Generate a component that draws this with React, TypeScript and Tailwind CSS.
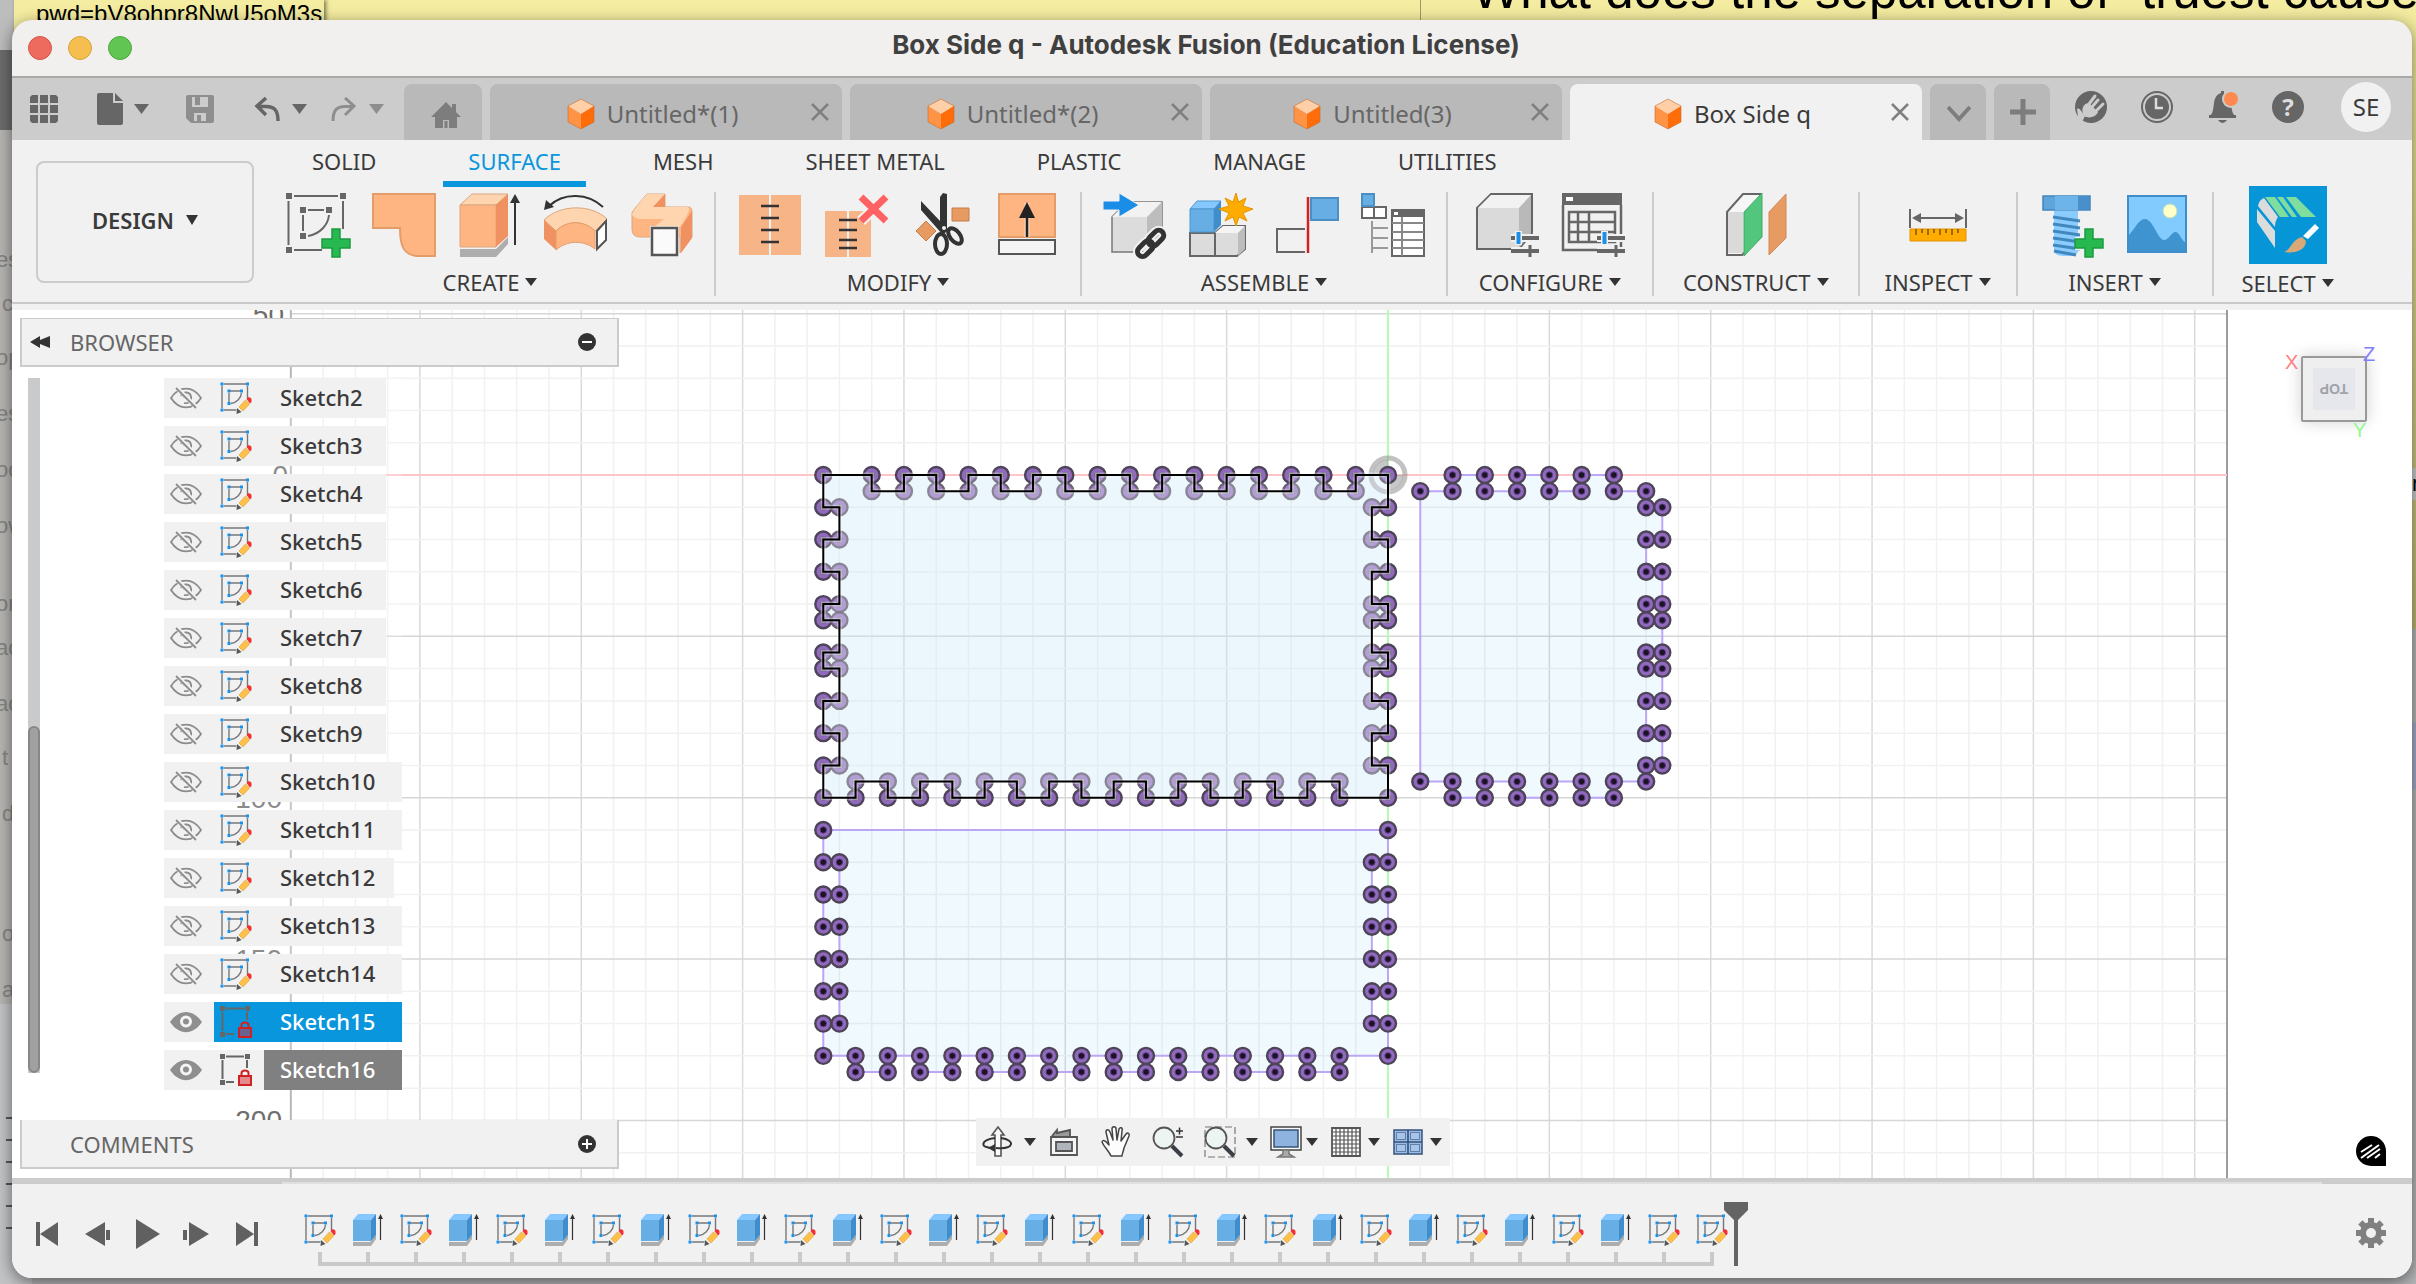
import React from "react";

type Pt = [number, number];

/* ---------- small shared drawings ---------- */

function Caret({ className = "h-2.5 w-3 text-[#333]" }: { className?: string }) {
  return (
    <svg viewBox="0 0 12 10" preserveAspectRatio="none" className={className} aria-hidden="true">
      <path d="M0 0H12L6 10Z" fill="currentColor" />
    </svg>
  );
}

function Cube() {
  return (
    <svg viewBox="0 0 28 32" className="h-8 w-7 shrink-0" aria-hidden="true">
      <path d="M14 1L27 8L14 16L1 8Z" fill="#ffcfa8" />
      <path d="M1 8L14 16V31L1 24Z" fill="#ff9447" />
      <path d="M27 8L14 16V31L27 24Z" fill="#ff6d0a" />
      <path d="M14 1L27 8V24L14 31L1 24V8Z" fill="none" stroke="#c96a2c" strokeOpacity=".6" />
    </svg>
  );
}

function SketchPencil() {
  return (
    <svg viewBox="0 0 32 32" className="h-8 w-8 shrink-0" aria-hidden="true">
      <g fill="none" stroke="#777" strokeWidth="1.4">
        <path d="M4 2H26M2 4V26M27.500 4V17M4 28H17M10 9H20M9 11V20M21.500 11C21 16 17 20.500 11 21.500" />
      </g>
      <g fill="#1c8fe8">
        <path d="M.5 .5h3v3h-3zM26 .5h3v3h-3zM.5 26.500h3v3h-3zM7.500 7.500h3v3h-3zM20 7.500h3v3h-3zM7.500 20h3v3h-3z" />
      </g>
      <path d="M18 23L25 15L32 21L23 31L15 32Z" fill="#f1f1f1" />
      <path d="M19 25L25.500 18L29.500 22L23 29Z" fill="#ffc04a" stroke="#e0a53a" strokeWidth=".7" />
      <path d="M26.500 17C28 14.500 31 15 31.500 17.500V20L30 21.500Z" fill="#f23030" />
      <path d="M17 26L21.500 30L16.500 32Z" fill="#555" />
    </svg>
  );
}

function SketchLock({ selected }: { selected?: boolean }) {
  return (
    <svg viewBox="0 0 32 32" className="h-8 w-8 shrink-0" aria-hidden="true">
      <path d="M6 2.500H24M2.500 6V25M27 6V14M6 28H14" fill="none" stroke="#666" strokeWidth="2" />
      <path d="M0 0h5v5h-5zM25 0h5v5h-5zM0 26h5v5h-5z" fill="#666" />
      <rect x="19" y="22" width="12" height="9" fill={selected ? "#6a6290" : "#e28a8c"} stroke="#d02222" strokeWidth="2" />
      <path d="M21.500 21V19C21.500 15.500 28.500 15.500 28.500 19V21" fill="none" stroke="#d02222" strokeWidth="2" />
    </svg>
  );
}

function EyeOff() {
  return (
    <svg viewBox="0 0 32 22" className="h-[22px] w-8" fill="none" stroke="#8c8c8c" strokeWidth="1.8" aria-hidden="true">
      <path d="M1 11C9-1.500 23-1.500 31 11C23 23.500 9 23.500 1 11Z" />
      <path d="M11 9C13 4 20 4.500 21 9.500C22 14 18 17 14 16M13.500 10.500C14 8.500 18 8.500 18 11.500" />
      <path d="M8 2L27 21" stroke="#f1f1f1" strokeWidth="4" />
      <path d="M6 1L26 21" />
    </svg>
  );
}

function EyeOn() {
  return (
    <svg viewBox="0 0 32 22" className="h-[22px] w-8" aria-hidden="true">
      <path d="M0 11C9-2.500 23-2.500 32 11C23 24.500 9 24.500 0 11Z" fill="#8f8f8f" />
      <circle cx="16" cy="10.500" r="4.500" fill="none" stroke="#f4f4f4" strokeWidth="3" />
    </svg>
  );
}

function ExtrudeSmall() {
  return (
    <svg viewBox="0 0 32 32" className="h-8 w-8 shrink-0" aria-hidden="true">
      <path d="M1 28H18L24 21V25L19 32H1Z" fill="#adadad" />
      <path d="M1 6L6 0H24L19 6Z" fill="#85c7ff" />
      <path d="M1 6H19V27H1Z" fill="#67aee5" />
      <path d="M19 6L24 0V21L19 27Z" fill="#3f8dcb" />
      <path d="M28.500 5V26" stroke="#333" strokeWidth="1.2" />
      <path d="M28.500 0L31 5H26Z" fill="#333" />
    </svg>
  );
}

function Icon({ children, label }: { children: React.ReactNode; label: string }) {
  return (
    <button type="button" aria-label={label} className="block h-16 w-16 shrink-0">
      <svg viewBox="0 0 64 64" className="h-16 w-16 overflow-visible" fill="none" aria-hidden="true">
        {children}
      </svg>
    </button>
  );
}

const GreenPlus = () => (
  <path
    d="M46 36H54V46H64V55H54V64H46V55H36V46H46Z"
    fill="#27b84f"
    stroke="#1d9a40"
    strokeWidth="1.5"
  />
);

const Sliders = () => (
  <g strokeWidth="4">
    <path d="M36 45H64M36 58H64" stroke="#f1f1f1" strokeWidth="8" />
    <path d="M36 45H64M36 58H64" stroke="#666" />
    <path d="M55 52V64" stroke="#666" strokeWidth="3" />
    <path d="M43.500 38V52" stroke="#f1f1f1" strokeWidth="7" />
    <path d="M43.500 39V51" stroke="#1c8fe8" />
  </g>
);

/* ---------- ribbon ---------- */

function Group({ title, pad, children }: { title: string; pad: string; children: React.ReactNode }) {
  return (
    <section aria-label={title} className={`flex h-[104px] flex-col items-center border-r-2 border-[#cbcbcb] ${pad}`}>
      <div className="flex h-[68px] items-center gap-[22px]">{children}</div>
      <button type="button" className="mt-2.5 flex items-center gap-1.5 text-[22px] leading-7 whitespace-nowrap text-[#3a3a3a]">
        {title}
        <Caret className="h-2 w-3 text-[#333]" />
      </button>
    </section>
  );
}

const ribbonTabs = ["SOLID", "SURFACE", "MESH", "SHEET METAL", "PLASTIC", "MANAGE", "UTILITIES"];

function Ribbon() {
  return (
    <div className="flex h-[170px] shrink-0 border-b-[6px] border-[#f1f1f1] bg-[#f1f1f1]">
      <div className="flex w-full border-b-2 border-[#c9c9c9] pl-6">
        <button
          type="button"
          className="mt-[21px] flex h-[122px] w-[218px] shrink-0 items-center justify-center gap-3 rounded-lg border-2 border-[#cbcbcb] pb-1 text-[22px] font-semibold text-[#3a3a3a]"
        >
          DESIGN
          <Caret className="h-2.5 w-3 text-[#333]" />
        </button>
        <div className="ml-3">
          <nav className="flex h-[47px] gap-[42px] pl-[21px]" aria-label="Workspace tabs">
            {ribbonTabs.map((t) => (
              <a
                key={t}
                href="#"
                className={`h-[47px] px-[25px] pt-[7px] text-[22px] leading-7 whitespace-nowrap ${
                  t === "SURFACE" ? "border-b-[6px] border-[#0a96dc] text-[#0a96dc]" : "text-[#3a3a3a]"
                }`}
              >
                {t}
              </a>
            ))}
          </nav>
          <div className="flex pt-[5px]">
            <Group title="CREATE" pad="px-5">
              <Icon label="Create sketch">
                <path d="M8 3H52M2.500 8V52M57 8V36M8 57H36M22 17H38M17 22V38M43 22C42 32 34 41 22 43" stroke="#666" strokeWidth="2" />
                <path d="M0 0h6v6h-6zM54 0h6v6h-6zM0 54h6v6h-6zM14 14h6v6h-6zM40 14h6v6h-6zM14 40h6v6h-6z" fill="#666" />
                <GreenPlus />
              </Icon>
              <Icon label="Patch">
                <path d="M1 1H63V63H44C32 61 28 54 28 35H1Z" fill="#ffb581" stroke="#e49c69" strokeWidth="2" />
              </Icon>
              <Icon label="Extrude">
                <path d="M2 56H38L50 44V51L38 64H2Z" fill="#adadad" />
                <path d="M2 12L14 1H50L38 12Z" fill="#ffd5b0" stroke="#dba77e" />
                <path d="M2 12H38V54H2Z" fill="#ffb581" stroke="#dba77e" />
                <path d="M38 12L50 1V43L38 54Z" fill="#ef9160" />
                <path d="M57 8V52" stroke="#333" strokeWidth="2" />
                <path d="M57 1L62 10H52Z" fill="#333" />
              </Icon>
              <Icon label="Revolve">
                <path d="M5 13C20-1 44 0 59 14" stroke="#333" strokeWidth="2" />
                <path d="M0 17L2 7L10 14Z" fill="#333" />
                <path d="M0 27C16 11 48 11 63 26L51 38C40 27 23 27 12 38Z" fill="#ffd5b0" stroke="#dba77e" />
                <path d="M0 27L12 38V57L0 46Z" fill="#ef9160" />
                <path d="M12 38C23 27 40 27 51 38V56C40 47 23 47 12 57Z" fill="#ffb581" stroke="#e49c69" />
                <path d="M53 38L62 28V47L53 56Z" fill="#fff" stroke="#555" strokeWidth="2" />
              </Icon>
              <Icon label="Loft">
                <path d="M2 20Q3 17 17 1H35V14H58Q62 14 62 19V44L50 60V44H10Q2 44 2 36Z" fill="#ffb581" stroke="#dba77e" />
                <path d="M2 22Q3 17 17 1H35L23 14H58Q62 16 50 34H24L34 26H12Q5 26 2 22Z" fill="#ffd5b0" />
                <path d="M35 1V14H23ZM62 18V45L51 60V34Z" fill="#ef9160" />
                <path d="M20 33H49V64H20Z" fill="#f1f1f1" />
                <path d="M22 35H47V62H22Z" fill="#fafafa" stroke="#555" strokeWidth="2.500" />
              </Icon>
            </Group>
            <Group title="MODIFY" pad="px-[21px]">
              <Icon label="Stitch">
                <path d="M2 2H64V62H2Z" fill="#f7b587" />
                <path d="M33 2V62" stroke="#f1f1f1" strokeWidth="2" />
                <path d="M24 13H42M24 25H42M24 37H42M24 49H42" stroke="#333" strokeWidth="2.500" />
              </Icon>
              <Icon label="Unstitch">
                <path d="M2 18H48V64H2Z" fill="#f7b587" />
                <path d="M25 18V64" stroke="#f1f1f1" strokeWidth="2" />
                <path d="M16 27H34M16 37H34M16 47H34M16 55H34" stroke="#333" strokeWidth="2.500" />
                <path d="M38 4L63 28M63 4L38 28" stroke="#f1f1f1" strokeWidth="11" />
                <path d="M38 4L63 28M63 4L38 28" stroke="#ff6262" strokeWidth="7" />
              </Icon>
              <Icon label="Trim">
                <path d="M43 15H60V28H43ZM17 28L27 38L17 48L7 38Z" fill="#e89a63" stroke="#c77d48" />
                <path d="M12 8L40 44M34 0V44" stroke="#f1f1f1" strokeWidth="10" />
                <path d="M12 8V17L34 42L38 38V1L34 0L31 4V28Z" fill="#333" />
                <ellipse cx="32" cy="51" rx="6" ry="10" stroke="#333" strokeWidth="4" />
                <ellipse cx="46" cy="43" rx="5" ry="9" transform="rotate(-38 46 43)" stroke="#333" strokeWidth="4" />
                <circle cx="35" cy="35" r="2" fill="#f1f1f1" />
              </Icon>
              <Icon label="Extend">
                <path d="M4 1H60V44H4Z" fill="#ffb581" stroke="#e49c69" strokeWidth="2" />
                <path d="M32 10V44" stroke="#f7d5bd" strokeWidth="5" />
                <path d="M32 14V44" stroke="#222" strokeWidth="2.500" />
                <path d="M32 9L40 25H24Z" fill="#222" />
                <path d="M4 47H60V61H4Z" fill="#f4f4f4" stroke="#555" strokeWidth="2" />
              </Icon>
            </Group>
            <Group title="ASSEMBLE" pad="px-[21px]">
              <Icon label="Insert derive">
                <path d="M9 24L24 9H59V44L44 59H9Z" fill="#dcdcdc" stroke="#777" strokeWidth="1.500" />
                <path d="M9 24L24 9H59L44 24Z" fill="#f2f2f2" />
                <path d="M44 24L59 9V45L44 60Z" fill="#bdbdbd" />
                <path d="M0 8H16V0L36 12L16 24V17H0Z" fill="#1a8de6" stroke="#f1f1f1" />
                <g transform="rotate(-45 48 50)" stroke="#f1f1f1" strokeWidth="9">
                  <rect x="31" y="45" width="18" height="10" rx="5" />
                  <rect x="46" y="45" width="18" height="10" rx="5" />
                </g>
                <g transform="rotate(-45 48 50)" stroke="#333" strokeWidth="5">
                  <rect x="31" y="45" width="18" height="10" rx="5" />
                  <rect x="46" y="45" width="18" height="10" rx="5" />
                </g>
              </Icon>
              <Icon label="New component">
                <path d="M1 40H26V63H1ZM26 40L34 33H56V56L48 63H26Z" fill="#dcdcdc" stroke="#666" strokeWidth="2" />
                <path d="M26 40L34 33H56L49 40Z" fill="#f4f4f4" />
                <path d="M49 40L56 33V56L49 63Z" fill="#bdbdbd" />
                <path d="M1 16L8 8H32L25 16Z" fill="#85c7ff" stroke="#4b97d0" />
                <path d="M1 16H25V39H1Z" fill="#67aee5" stroke="#4b97d0" />
                <path d="M25 16L32 8V32L25 39Z" fill="#3f8dcb" />
                <path
                  d="M47 0L49.500 9L57 5L54 13L64 16L54 20L58 28L50 24L47 33L44 24L36 28L40 20L30 16L40 13L36 5L44 9Z"
                  fill="#ffab00"
                  stroke="#e39400"
                />
              </Icon>
              <Icon label="Joint">
                <path d="M30 36H2V59H30" fill="#f1f1f1" stroke="#666" strokeWidth="2" />
                <path d="M33 4V60" stroke="#d02222" strokeWidth="2.500" />
                <path d="M36 5H63V27H36Z" fill="#67aee5" stroke="#4b8fc4" strokeWidth="2" />
              </Icon>
              <Icon label="Component table">
                <path d="M1 14H13V25H1ZM13 14H25V25H13Z" fill="#fff" stroke="#666" strokeWidth="2" />
                <path d="M1 1H13V13H1Z" fill="#67aee5" stroke="#4b8fc4" strokeWidth="2" />
                <path d="M11 28V60M11 35H27M11 45H27M11 55H27" stroke="#999" strokeWidth="2" />
                <path d="M31 17H63V63H31Z" fill="#fff" stroke="#666" strokeWidth="2" />
                <path d="M30 16H64V24H30Z" fill="#666" />
                <path d="M31 30H63M31 39H63M31 47H63M31 55H63M41 24V63" stroke="#888" strokeWidth="2" />
                <path d="M33 19h4v3h-4z" fill="#fff" />
              </Icon>
            </Group>
            <Group title="CONFIGURE" pad="px-[27px]">
              <Icon label="Configure model">
                <path d="M2 15L16 1H57V40L44 56H2Z" fill="#dadada" stroke="#666" strokeWidth="2" />
                <path d="M3 15L16 2H56L44 15Z" fill="#f2f2f2" />
                <path d="M44 15L56 2V40L44 55Z" fill="#b9b9b9" />
                <Sliders />
              </Icon>
              <Icon label="Configuration table">
                <path d="M2 12V57H60V12" fill="#f1f1f1" stroke="#666" strokeWidth="2.500" />
                <path d="M1 0H61V12H1Z" fill="#666" />
                <path d="M5 4h7v4h-7z" fill="#fff" />
                <path d="M8 19H54V49H8ZM8 29H54M8 39H54M17 19V49M28 19V49" stroke="#666" strokeWidth="2.500" />
                <Sliders />
              </Icon>
            </Group>
            <Group title="CONSTRUCT" pad="px-[29px]">
              <Icon label="Offset plane">
                <path d="M3 19L19 1H36V44L18 62H3Z" fill="#f6f6f6" stroke="#666" strokeWidth="2" />
                <path d="M4 19H19V60H4Z" fill="#dadada" />
                <path d="M20 19L38 0V44L20 63Z" fill="#52c67c" stroke="#40a866" />
                <path d="M39 0V50L46 44V0Z" fill="#f1f1f1" />
                <path d="M45 19L62 1V45L45 62Z" fill="#e89a63" stroke="#cf8855" />
              </Icon>
            </Group>
            <Group title="INSPECT" pad="px-[25px]">
              <Icon label="Measure">
                <path d="M4 16V35M60 16V35M8 25H56" stroke="#666" strokeWidth="2" />
                <path d="M6 25L15 20V30ZM58 25L49 20V30Z" fill="#666" />
                <path d="M4 36H60V48H4Z" fill="#ffab00" stroke="#e39400" />
                <path d="M10 36V42M16 36V40M22 36V42M28 36V40M34 36V42M40 36V40M46 36V42M52 36V40" stroke="#7a5600" strokeWidth="1.500" />
              </Icon>
            </Group>
            <Group title="INSERT" pad="px-[22px]">
              <Icon label="Insert fastener">
                <path d="M14 18H38V58Q38 63 26 63Q14 63 14 58Z" fill="#8accff" />
                <path d="M13 24L40 28M13 31L40 35M13 38L40 42M13 45L40 49M13 52L40 56M14 58L36 62" stroke="#4088bd" strokeWidth="3" />
                <path d="M3 3H50V17H3Z" fill="#5fa5dc" stroke="#3f86bd" strokeWidth="1.500" />
                <path d="M15 3H38V17H15Z" fill="#6db4ea" />
                <path d="M38 3H49V16H38Z" fill="#4790cb" />
                <path d="M45 34H56V44H65V57H56V65H45V57H35V44H45Z" fill="#f1f1f1" />
                <g transform="translate(-1 0)">
                  <GreenPlus />
                </g>
              </Icon>
              <Icon label="Canvas">
                <path d="M2 3H60V59H2Z" fill="#82cbff" stroke="#3f8dcb" strokeWidth="2" />
                <path d="M3 42C10 34 13 26 19 26C27 26 32 47 38 47C43 47 46 38 50 39C54 40 55 47 59 49V58H3Z" fill="#3f93ce" />
                <circle cx="44" cy="18" r="7" fill="#ffffc8" stroke="#bcdcc0" />
              </Icon>
            </Group>
            <section aria-label="Select" className="-mt-[6px] flex flex-col items-center px-7">
              <button type="button" aria-label="Select tool" className="h-[78px] w-[78px] bg-[#0696d7]">
                <svg viewBox="0 0 78 78" className="h-full w-full" fill="none" aria-hidden="true">
                  <path d="M16 11H26L40 31H31ZM28 11H34L48 31H43ZM37 11H47L67 31H52Z" fill="#7fdd9e" />
                  <path d="M15 12L29 31Q26 35 26 41L9 20Q10 14 15 12Z" fill="#dcdcdc" />
                  <path d="M8 23L26 45V62L8 36Z" fill="#dcdcdc" />
                  <path d="M66 38L70 42L59 53L54 50Z" fill="#fff" />
                  <path d="M53 51L57 55C57 64 46 68 35 66C42 64 42 54 53 51Z" fill="#d9a877" />
                </svg>
              </button>
              <button type="button" className="mt-[5px] flex items-center gap-1.5 text-[22px] leading-7 text-[#3a3a3a]">
                SELECT
                <Caret className="h-2 w-3 text-[#333]" />
              </button>
            </section>
          </div>
        </div>
      </div>
    </div>
  );
}

/* ---------- document tabs ---------- */

const docs = [
  { name: "Untitled*(1)", active: false },
  { name: "Untitled*(2)", active: false },
  { name: "Untitled(3)", active: false },
  { name: "Box Side q", active: true },
];

function TabBar() {
  return (
    <div className="flex h-16 shrink-0 border-t-2 border-[#a9a9a9] bg-[#ccc] text-[#666]">
      <div className="flex w-[392px] shrink-0 items-center pl-[18px]">
        <button type="button" aria-label="Data panel">
          <svg viewBox="0 0 28 28" className="h-7 w-7" fill="currentColor" aria-hidden="true">
            <path d="M2 0h6v8h-8v-6zM10 0h8v8h-8zM20 0h6l2 2v6h-8zM0 10h8v8h-8zM10 10h8v8h-8zM20 10h8v8h-8zM0 20h8v8h-6l-2-2zM10 20h8v8h-8zM20 20h8v6l-2 2h-6z" />
          </svg>
        </button>
        <button type="button" aria-label="File" className="ml-[39px] flex items-center gap-[11px]">
          <svg viewBox="0 0 26 32" className="h-8 w-[26px]" fill="currentColor" aria-hidden="true">
            <path d="M2 0H16V10H26V30Q26 32 24 32H2Q0 32 0 30V2Q0 0 2 0Z" />
            <path d="M18 0L26 8H18Z" />
          </svg>
          <Caret className="h-2.5 w-[15px]" />
        </button>
        <button type="button" aria-label="Save" className="ml-[37px] text-[#8e8e8e]">
          <svg viewBox="0 0 28 28" className="h-7 w-7" fill="currentColor" fillRule="evenodd" aria-hidden="true">
            <path d="M0 2Q0 0 2 0H26Q28 0 28 2V26Q28 28 26 28H5L0 23ZM6 2V12H22V2ZM8 18V26H20V18ZM11 20H15V26H11ZM14 2V10H9V2Z" />
          </svg>
        </button>
        <button type="button" aria-label="Undo" className="ml-10 flex items-center gap-3">
          <svg viewBox="0 0 26 24" className="h-6 w-[26px]" fill="none" stroke="currentColor" strokeWidth="3.500" aria-hidden="true">
            <path d="M12 1L3 9L12 18M3 9.500H12C21 9.500 24 14 24 24" />
          </svg>
          <Caret className="h-2.5 w-[15px]" />
        </button>
        <button type="button" aria-label="Redo" className="ml-6 flex items-center gap-3 text-[#8e8e8e]">
          <svg viewBox="0 0 26 24" className="h-6 w-[26px]" fill="none" stroke="currentColor" strokeWidth="3" aria-hidden="true">
            <path d="M14 1L23 9L14 18M23 9.500H14C5 9.500 2 14 2 24" />
          </svg>
          <Caret className="h-2.5 w-[15px]" />
        </button>
      </div>
      <div className="flex min-w-0 flex-1 items-end gap-2">
        <button type="button" aria-label="Home" className="flex h-14 w-[78px] shrink-0 items-center justify-center rounded-t-lg bg-[#b9b9b9] pt-1.5 pl-1.5 text-[#7d7d7d]">
          <svg viewBox="0 0 30 28" className="h-7 w-[30px]" fill="currentColor" aria-hidden="true">
            <path d="M15 1L21 7V3H25V11L30 16H26V27H18V19H12V27H4V16H0Z" />
            <path d="M13.500 20h3v7h-3z" />
          </svg>
        </button>
        {docs.map((d) => (
          <div
            key={d.name}
            className={`flex h-14 min-w-0 flex-1 items-center rounded-t-lg pt-1 pr-[11px] ${
              d.active ? "bg-[#f1f1f1] text-[#3a3a3a]" : "bg-[#b9b9b9] text-[#666]"
            }`}
          >
            <button type="button" className="flex flex-1 items-center justify-center gap-3 pl-1.5 text-2xl leading-8 whitespace-nowrap">
              <Cube />
              {d.name}
            </button>
            <button type="button" aria-label={`Close ${d.name}`} className="text-[#808080]">
              <svg viewBox="0 0 22 18" className="mb-1 h-[18px] w-[22px]" fill="none" stroke="currentColor" strokeWidth="2.500" aria-hidden="true">
                <path d="M3 1L19 17M19 1L3 17" />
              </svg>
            </button>
          </div>
        ))}
        <button type="button" aria-label="All tabs" className="flex h-14 w-14 shrink-0 items-center justify-center rounded-t-lg bg-[#b9b9b9] pt-1 pl-0.5 text-[#7d7d7d]">
          <svg viewBox="0 0 24 18" className="h-[18px] w-6" fill="none" stroke="currentColor" strokeWidth="4" aria-hidden="true">
            <path d="M1 2L12 14L23 2" />
          </svg>
        </button>
        <button type="button" aria-label="New tab" className="flex h-14 w-14 shrink-0 items-center justify-center rounded-t-lg bg-[#b9b9b9] pl-0.5 text-[#7d7d7d]">
          <svg viewBox="0 0 26 26" className="h-[26px] w-[26px]" fill="none" stroke="currentColor" strokeWidth="5" aria-hidden="true">
            <path d="M13 0V26M0 13H26" />
          </svg>
        </button>
      </div>
      <div className="flex shrink-0 items-center gap-[33px] pr-[21px] pb-1 pl-[25px]">
        <button type="button" aria-label="Extensions">
          <svg viewBox="0 0 32 32" className="h-8 w-8" aria-hidden="true">
            <circle cx="16" cy="16" r="16" fill="#666" />
            <path d="M2 18C5 16 6 21 10 25L7 31L3 26Z" fill="#ccc" />
            <path d="M9 25C5 18 9 12 14 12L23 21C21 26 14 28 9 25Z" fill="#ccc" />
            <path d="M14 13L20 5M17 16L23 9M21 20L28 13" stroke="#ccc" strokeWidth="3" fill="none" strokeLinecap="round" />
          </svg>
        </button>
        <button type="button" aria-label="Job status">
          <svg viewBox="0 0 34 34" className="h-[34px] w-[34px]" fill="none" aria-hidden="true">
            <circle cx="17" cy="17" r="15" stroke="#666" strokeWidth="2" />
            <circle cx="17" cy="17" r="12" fill="#666" />
            <path d="M16 8V18H23" stroke="#ddd" strokeWidth="2.500" />
          </svg>
        </button>
        <button type="button" aria-label="Notifications">
          <svg viewBox="0 0 32 34" className="h-[34px] w-8" aria-hidden="true">
            <path d="M3 26C6 23 6 20 7 13C8 6 11 4 14 3V1H17V3C22 5 23 8 24 13C25 20 25 23 28 26Z" fill="#666" />
            <path d="M11 30H20Q18 33 15.500 33Q13 33 11 30ZM2 25H29V28H2Z" fill="#666" />
            <circle cx="24" cy="9" r="9" fill="#ccc" />
            <circle cx="24" cy="9" r="7" fill="#ff8a50" />
          </svg>
        </button>
        <button type="button" aria-label="Help" className="flex h-8 w-8 items-center justify-center rounded-full bg-[#666] text-2xl leading-8 font-bold text-[#ddd]">
          ?
        </button>
        <button type="button" className="ml-1 flex h-[50px] w-[50px] items-center justify-center rounded-full bg-[#f1f1f1] text-2xl text-[#3a3a3a]">
          SE
        </button>
      </div>
    </div>
  );
}

/* ---------- canvas ---------- */

const H = 16.135;
const OX = 1376;
const OY = 165;
const px = (p: Pt): Pt => [OX + p[0] * H, OY + p[1] * H];
const toPath = (pts: Pt[]) => "M" + pts.map((p) => px(p).join(" ")).join("L") + "Z";

const sideLevels = [2, 4, 6, 8, 9, 11, 12, 14, 16, 18];

function buildFront(): Pt[] {
  const pts: Pt[] = [[-35, 0]];
  for (let x = -32; x <= -4; x += 4) pts.push([x, 0], [x, 1], [x + 2, 1], [x + 2, 0]);
  pts.push([0, 0]);
  sideLevels.forEach((y, i) => pts.push(i % 2 ? [-1, y] : [0, y], i % 2 ? [0, y] : [-1, y]));
  pts.push([0, 20]);
  for (let x = -3; x >= -31; x -= 4) pts.push([x, 20], [x, 19], [x - 2, 19], [x - 2, 20]);
  pts.push([-35, 20]);
  [...sideLevels].reverse().forEach((y, i) => pts.push(i % 2 ? [-34, y] : [-35, y], i % 2 ? [-35, y] : [-34, y]));
  return pts;
}

function buildSide(): Pt[] {
  const pts: Pt[] = [[2, 1]];
  for (let x = 4; x <= 12; x += 4) pts.push([x, 1], [x, 0], [x + 2, 0], [x + 2, 1]);
  pts.push([16, 1]);
  sideLevels.forEach((y, i) => pts.push(i % 2 ? [17, y] : [16, y], i % 2 ? [16, y] : [17, y]));
  pts.push([16, 19]);
  for (let x = 14; x >= 6; x -= 4) pts.push([x, 19], [x, 20], [x - 2, 20], [x - 2, 19]);
  pts.push([2, 19]);
  return pts;
}

function buildBottom(): Pt[] {
  const levels = [24, 26, 28, 30, 32, 34];
  const pts: Pt[] = [[-35, 22], [0, 22]];
  levels.forEach((y, i) => pts.push(i % 2 ? [-1, y] : [0, y], i % 2 ? [0, y] : [-1, y]));
  pts.push([0, 36]);
  for (let x = -3; x >= -31; x -= 4) pts.push([x, 36], [x, 37], [x - 2, 37], [x - 2, 36]);
  pts.push([-35, 36]);
  [...levels].reverse().forEach((y, i) => pts.push(i % 2 ? [-34, y] : [-35, y], i % 2 ? [-35, y] : [-34, y]));
  return pts;
}

const front = buildFront();
const side = buildSide();
const bottom = buildBottom();
const isInner = (p: Pt) => p[0] === -1 || p[0] === -34 || p[1] === 1 || p[1] === 19;

function Dot({ p, variant = "solid" }: { p: Pt; variant?: "solid" | "edge" | "inner" }) {
  const [x, y] = px(p);
  const core = variant === "solid" ? "#1b1224" : "#6d6678";
  return (
    <g opacity={variant === "inner" ? 0.85 : 1}>
      <circle cx={x} cy={y} r="8" fill="#9169bf" stroke="#4e4458" strokeWidth="2.4" />
      <circle cx={x} cy={y} r="3.200" fill={core} stroke="#5b3f80" strokeWidth={variant === "solid" ? 1 : 0} />
    </g>
  );
}

function GridCanvas() {
  const step = H * 2;
  const cols = Array.from({ length: 61 }, (_, i) => i - 34);
  const rows = Array.from({ length: 27 }, (_, i) => i - 5);
  const left = OX - 34 * step;
  const right = OX + 26 * step;
  return (
    <svg className="absolute inset-0 h-full w-full" aria-label="Sketch canvas">
      {cols.map((c) => (
        <line key={c} x1={OX + c * step} x2={OX + c * step} y1="0" y2="868" stroke={c % 5 === 0 ? "#dadada" : "#f1f1f1"} strokeWidth="1.5" />
      ))}
      {rows.map((r) => (
        <line key={r} x1={left} x2={right} y1={OY + r * step} y2={OY + r * step} stroke={r % 5 === 0 ? "#d6d6d6" : "#f1f1f1"} strokeWidth="1.5" />
      ))}
      <line x1={left} x2={left} y1="0" y2="868" stroke="#b8b8b8" strokeWidth="2" />
      <line x1={right} x2={right} y1="0" y2="868" stroke="#808080" strokeWidth="1.5" />
      <line x1={left} x2={right} y1={OY} y2={OY} stroke="#ffc4c8" strokeWidth="2" />
      <line x1={OX} x2={OX} y1="0" y2="868" stroke="#b4fbb4" strokeWidth="2" />
      <g fill="#6e6e6e" fontSize="28" textAnchor="end" fontFamily="Liberation Sans, Arial, sans-serif">
        <text x="272" y="14">50</text>
        <text x="276" y="175">0</text>
        <text x="270" y="498">100</text>
        <text x="270" y="659">150</text>
        <text x="270" y="820">200</text>
      </g>
      <path d={toPath(side)} fill="#1ea3ec" fillOpacity=".065" stroke="#bca7f7" strokeWidth="2" />
      <path d={toPath(bottom)} fill="#1ea3ec" fillOpacity=".065" stroke="#bca7f7" strokeWidth="2" />
      <path d={toPath(front)} fill="#1e9bec" fillOpacity=".08" />
      <circle cx={OX} cy={OY} r="17" fill="none" stroke="#8f8f8f" strokeOpacity=".55" strokeWidth="5" />
      <path
        d={`M${OX} ${OY}V${OY - 15}A15 15 0 0 0 ${OX - 15} ${OY}ZM${OX} ${OY}V${OY + 15}A15 15 0 0 0 ${OX + 15} ${OY}Z`}
        fill="#8f8f8f"
        fillOpacity=".5"
      />
      {[...side, ...bottom].map((p, i) => (
        <Dot key={i} p={p} />
      ))}
      {front.map((p, i) => (
        <Dot key={i} p={p} variant={isInner(p) ? "inner" : "edge"} />
      ))}
      <path d={toPath(front)} fill="#ebf6fd" fillOpacity=".28" stroke="#fff" strokeOpacity=".35" strokeWidth="5" />
      <path d={toPath(front)} fill="none" stroke="#000" strokeWidth="2" />
    </svg>
  );
}

const sketches = Array.from({ length: 15 }, (_, i) => i + 2);

function SketchRow({ n }: { n: number }) {
  const blue = n === 15;
  const gray = n === 16;
  const wide = n === 12 ? "w-[230px]" : n >= 10 ? "w-[238px]" : "w-[222px]";
  return (
    <li className={`flex h-10 bg-[#f1f1f1] ${wide}`}>
      <button type="button" aria-label={`Toggle visibility of Sketch${n}`} className="flex w-[50px] shrink-0 items-center pl-1.5">
        {n > 14 ? <EyeOn /> : <EyeOff />}
      </button>
      <button type="button" className={`flex min-w-0 flex-1 items-stretch text-left ${blue ? "bg-[#0a96dc]" : ""}`}>
        <span className="flex w-[50px] shrink-0 items-center pl-1.5">
          {n > 14 ? <SketchLock selected={blue} /> : <SketchPencil />}
        </span>
        <span className={`flex-1 pl-4 text-[22px] leading-[38px] font-medium ${blue ? "text-white" : gray ? "bg-[#808080] text-white" : "text-[#3a3a3a]"}`}>
          Sketch{n}
        </span>
      </button>
    </li>
  );
}

function RoundSign({ plus }: { plus?: boolean }) {
  return (
    <svg viewBox="0 0 18 18" className="h-[18px] w-[18px]" aria-hidden="true">
      <circle cx="9" cy="9" r="9" fill="#333" />
      <path d={plus ? "M9 4V14M4 9H14" : "M4 9H14"} stroke="#fff" strokeWidth="2" />
    </svg>
  );
}

function NavBar() {
  const frame = "h-8 w-8";
  return (
    <div className="absolute bottom-3 left-[964px] flex h-12 items-center bg-[#f1f1f1] pr-2 pl-1.5" role="toolbar" aria-label="Navigation">
      <button type="button" aria-label="Orbit" className="mr-3 flex items-center gap-2.5">
        <svg viewBox="0 0 32 32" className={frame} fill="#fafafa" stroke="#555" strokeWidth="1.600" aria-hidden="true">
          <path d="M13 30V9H10L16 1L22 9H19V30Z" />
          <path d="M13 12C-2 14-2 22 10 22M19 12C34 14 32 24 14 22" fill="none" stroke="#333" strokeWidth="2" />
          <path d="M6 22L13 18V26Z" fill="#333" stroke="none" />
        </svg>
        <Caret className="h-2 w-3 text-[#333]" />
      </button>
      <button type="button" aria-label="Look at" className="mr-5">
        <svg viewBox="0 0 32 32" className={frame} fill="#f5f5f5" stroke="#555" strokeWidth="1.800" aria-hidden="true">
          <path d="M4 10L9 4V7L22 4V10" fill="#999" />
          <path d="M3 11H29V29H3Z" />
          <path d="M8 16H24V25H8Z" fill="#b0b4bd" />
        </svg>
      </button>
      <button type="button" aria-label="Pan" className="mr-5">
        <svg viewBox="0 0 32 32" className={frame} fill="#fdfdfd" stroke="#444" strokeWidth="1.500" strokeLinejoin="round" aria-hidden="true">
          <path d="M11 30C9 25 4 21 2 16C3 13 6 15 9 19L6 6C6 3 9 3 10 6L13 14L12 3C12 0 16 0 16 3L17 14L19 3C20 1 23 1 22 5L21 15L26 8C28 6 30 8 29 10L24 22C23 27 22 28 22 30Z" />
        </svg>
      </button>
      <button type="button" aria-label="Zoom" className="mr-5">
        <svg viewBox="0 0 32 32" className={frame} fill="none" stroke="#555" strokeWidth="1.800" aria-hidden="true">
          <circle cx="12" cy="12" r="10.500" fill="#edf5f3" />
          <path d="M20 20L30 30" stroke="#3a3f47" strokeWidth="4" />
          <path d="M24 5H31M27.500 1.500V8.500M24 11H31" stroke="#333" strokeWidth="1.500" />
        </svg>
      </button>
      <button type="button" aria-label="Zoom window" className="mr-3 flex items-center gap-2.5">
        <svg viewBox="0 0 32 32" className={frame} fill="none" stroke="#777" strokeWidth="1.200" aria-hidden="true">
          <path d="M1 1H31V31H1Z" strokeDasharray="7 3" />
          <circle cx="12" cy="12" r="10.500" fill="#edf5f3" stroke="#555" strokeWidth="1.800" />
          <path d="M20 20L30 30" stroke="#3a3f47" strokeWidth="4" />
        </svg>
        <Caret className="h-2 w-3 text-[#333]" />
      </button>
      <button type="button" aria-label="Display settings" className="mr-3 flex items-center gap-1">
        <svg viewBox="0 0 32 32" className={frame} fill="#fafafa" stroke="#444" strokeWidth="1.500" aria-hidden="true">
          <path d="M1 1H31V24H1Z" />
          <path d="M4 4H28V21H4Z" fill="#8fb3df" stroke="#36537a" />
          <path d="M13 24H19V28L24 31H8L13 28Z" fill="#aaa" stroke="#777" />
        </svg>
        <Caret className="h-2 w-3 text-[#333]" />
      </button>
      <button type="button" aria-label="Grid and snaps" className="mr-3 flex items-center gap-1.5">
        <svg viewBox="0 0 32 32" className={frame} fill="#fafafa" stroke="#555" strokeWidth="1.200" aria-hidden="true">
          <path d="M2 2H30V30H2Z" strokeWidth="1.800" />
          <path d="M6 2V30M10 2V30M14 2V30M18 2V30M22 2V30M26 2V30M2 6H30M2 10H30M2 14H30M2 18H30M2 22H30M2 26H30" />
        </svg>
        <Caret className="h-2 w-3 text-[#333]" />
      </button>
      <button type="button" aria-label="Viewports" className="flex items-center gap-1.5">
        <svg viewBox="0 0 32 32" className={frame} fill="#9dbce3" stroke="#33527d" strokeWidth="1.500" aria-hidden="true">
          <path d="M2 4H30V28H2Z" />
          <path d="M4.500 6.500H13.500V13.500H4.500ZM18.500 6.500H27.500V13.500H18.500ZM4.500 18.500H13.500V25.500H4.500ZM18.500 18.500H27.500V25.500H18.500Z" fill="#a8c4e8" strokeWidth=".6" />
          <path d="M16 4V28M2 16H30" strokeWidth="1.600" />
        </svg>
        <Caret className="h-2 w-3 text-[#333]" />
      </button>
    </div>
  );
}

function Canvas() {
  return (
    <div className="relative flex flex-1 flex-col overflow-hidden bg-white px-2 pt-2 pb-[9px]">
      <GridCanvas />
      <div className="relative flex h-[49px] w-[599px] items-center border-2 border-t border-[#cbcbcb] bg-[#f1f1f1] pr-[21px] pl-2">
        <button type="button" aria-label="Collapse browser">
          <svg viewBox="0 0 20 12" className="h-3 w-5" fill="#333" aria-hidden="true">
            <path d="M0 6L10 0V4L20 0V12L10 8V12Z" />
          </svg>
        </button>
        <h2 className="flex-1 pl-5 text-[22px] leading-7 text-[#666]">BROWSER</h2>
        <button type="button" aria-label="Minimize browser">
          <RoundSign />
        </button>
      </div>
      <div className="relative mt-[11px] flex flex-1 pl-2">
        <div className="relative mb-[47px] w-3 bg-[#c9cacc]">
          <div className="absolute right-0 bottom-0 h-1/2 w-3 rounded-full border-2 border-[#868686] bg-[#a0a0a0]" />
        </div>
        <ul className="ml-[124px] flex flex-col gap-2 self-start bg-white/20">
          {sketches.map((n) => (
            <SketchRow key={n} n={n} />
          ))}
        </ul>
      </div>
      <div className="relative flex h-[49px] w-[599px] items-center border-2 border-t-0 border-[#cbcbcb] bg-[#f1f1f1] pr-[21px] pl-12">
        <h2 className="flex-1 text-[22px] leading-7 text-[#666]">COMMENTS</h2>
        <button type="button" aria-label="Expand comments">
          <RoundSign plus />
        </button>
      </div>
      <NavBar />
      <div className="absolute top-[34px] right-[33px] h-24 w-24 font-['Liberation_Sans',sans-serif] text-[20px] leading-5">
        <div className="absolute top-3 left-[18px] flex h-[66px] w-[66px] items-center justify-center rounded-xs border-2 border-[#999] bg-[#efefef] shadow-[0_0_16px_rgba(0,0,0,0.18)]">
          <div className="flex h-[42px] w-[42px] rotate-180 items-center justify-center bg-[#e5e7ec] text-sm font-bold text-[#a0a3aa]">TOP</div>
        </div>
        <span className="absolute top-2 left-0.5 text-[#ff8080]">X</span>
        <span className="absolute top-0 left-20 text-[#8080ff]">Z</span>
        <span className="absolute top-[76px] left-[70px] text-[#90f890]">Y</span>
      </div>
      <button type="button" aria-label="Assistant" className="absolute right-[26px] bottom-3 h-[30px] w-[30px]">
        <svg viewBox="0 0 30 30" className="h-full w-full" aria-hidden="true">
          <path d="M15 0A15 15 0 0 1 30 15V30H15A15 15 0 0 1 15 0Z" fill="#000" />
          <path d="M5 16L16 9M5 22L23 9M11 22L24 13M19 22L24 18" stroke="#fff" strokeWidth="2" />
        </svg>
      </button>
    </div>
  );
}

/* ---------- timeline ---------- */

const playback = [
  { label: "Go to start", d: "M0 4h4v24h-4zM22 4V28L4 16Z" },
  { label: "Step back", d: "M20 4V28L0 16ZM21 12h4v10h-4z" },
  { label: "Play", d: "M2 1L26 16L2 31Z" },
  { label: "Step forward", d: "M0 12h4v10h-4zM6 4V28L26 16Z" },
  { label: "Go to end", d: "M4 4V28L22 16ZM22 4h4v24h-4z" },
];

function Timeline() {
  return (
    <div className="flex h-[100px] shrink-0 flex-col bg-[#f1f1f1]">
      <div className="h-1.5 bg-[#ccc] pt-1 pr-[90px] pl-[270px]">
        <div className="h-0.5 bg-[#e0e0e0]" />
      </div>
      <div className="flex flex-1 items-start pr-[26px] pl-6">
        <div className="mt-[34px] flex gap-[23px]">
          {playback.map((b) => (
            <button key={b.label} type="button" aria-label={b.label}>
              <svg viewBox="0 0 26 32" className="h-8 w-[26px] text-[#606060]" fill="currentColor" aria-hidden="true">
                <path d={b.d} />
              </svg>
            </button>
          ))}
        </div>
        <div className="mt-[30px] ml-[38px] flex flex-col">
          <ol className="flex">
            {Array.from({ length: 30 }, (_, i) => (
              <li key={i} className="flex w-12 flex-col items-center">
                <button type="button" aria-label={i % 2 && i < 29 ? "Extrude feature" : "Sketch feature"}>
                  {i % 2 && i < 29 ? <ExtrudeSmall /> : <SketchPencil />}
                </button>
                <span className="mt-1.5 h-2.5 w-1 bg-[#c9c9c9]" />
              </li>
            ))}
          </ol>
          <div className="mx-[22px] h-1 bg-[#c9c9c9]" />
        </div>
        <svg viewBox="0 0 24 64" className="mt-[18px] -ml-3 h-16 w-6" fill="#646464" aria-hidden="true">
          <path d="M0 0H24V8L14 18V64H10V18L0 8Z" />
        </svg>
        <button type="button" aria-label="Timeline settings" className="mt-[34px] ml-auto">
          <svg viewBox="-15 -15 30 30" className="h-[30px] w-[30px]" aria-hidden="true">
            <g fill="#808080">
              {[0, 45, 90, 135].map((a) => (
                <rect key={a} x="-3" y="-15" width="6" height="30" transform={`rotate(${a})`} />
              ))}
            </g>
            <circle r="8" fill="none" stroke="#808080" strokeWidth="6" />
            <circle r="5" fill="#f1f1f1" />
          </svg>
        </button>
      </div>
    </div>
  );
}

/* ---------- desktop behind the window ---------- */

const leftSnips = [
  { t: "es", c: "top-[246px]" },
  { t: " c", c: "top-[290px]" },
  { t: "op", c: "top-[344px]" },
  { t: "es", c: "top-[400px]" },
  { t: "oo", c: "top-[456px]" },
  { t: "ow", c: "top-[512px]" },
  { t: "on", c: "top-[590px]" },
  { t: "ac", c: "top-[634px]" },
  { t: "ac", c: "top-[690px]" },
  { t: " t", c: "top-[744px]" },
  { t: " d", c: "top-[800px]" },
  { t: " o", c: "top-[920px]" },
  { t: " a", c: "top-[976px]" },
];

function Desktop() {
  return (
    <div className="absolute inset-0 overflow-hidden bg-[#b4b5b7] font-['Liberation_Sans',sans-serif]" aria-hidden="true">
      <div className="absolute top-0 left-0 h-[50px] w-6 bg-[#bdbdbd]" />
      <div className="absolute top-[50px] left-0 h-20 w-6 bg-[#6c6c6c]" />
      <div className="absolute top-[131px] left-0 h-[873px] w-6 bg-[#b7b6b3]" />
      {leftSnips.map((s) => (
        <span key={s.c} className={`absolute -left-1 text-[22px] leading-7 whitespace-pre text-[#868583] ${s.c}`}>
          {s.t}
        </span>
      ))}
      <div className="absolute top-[1004px] left-0 h-[280px] w-8 bg-[#c3c4c6]" />
      <div className="absolute top-[1117px] left-1.5 flex flex-col gap-5">
        {[0, 1, 2, 3, 4, 5].map((i) => (
          <span key={i} className="h-0.5 w-3 bg-[#555]" />
        ))}
      </div>
      <div className="absolute top-0 right-0 left-[324px] h-10 bg-[#f4eca0]" />
      <div className="absolute top-0 left-3.5 h-10 w-[310px] overflow-hidden bg-[#f4eca0] pl-[22px] text-2xl leading-7 text-black shadow-[2px_0_4px_rgba(0,0,0,0.5)]">
        pwd=bV8ohpr8NwU5oM3s
      </div>
      <div className="absolute top-0 right-0 left-[1420px] h-[629px] overflow-hidden border-l border-[#a09b6a] bg-linear-to-b from-[#f4eca0] to-[#bdb573]">
        <p className="-mt-[38px] ml-[51px] text-[51px] leading-[58px] whitespace-nowrap text-black">What does the separation of “truest cause</p>
      </div>
      <div className="absolute top-[468px] right-0 h-8 w-3 bg-[#c9c9c9] pt-0.5 pl-2 text-[22px] leading-7 text-black">n</div>
      <div className="absolute top-[722px] right-0 h-[68px] w-3 bg-[#a3abc6]" />
    </div>
  );
}

export default function App() {
  return (
    <div className="relative flex min-h-screen flex-col pt-5 pr-1 pb-1.5 pl-3 font-['Noto_Sans',sans-serif]">
      <Desktop />
      <main className="relative flex flex-1 flex-col overflow-hidden rounded-[20px] bg-[#f1f0ee] shadow-[0_4px_16px_rgba(0,0,0,0.5)]">
        <header className="relative flex h-14 shrink-0 items-center justify-center pr-3 font-['Inter',sans-serif]">
          <div className="absolute left-4 flex gap-4">
            <button type="button" aria-label="Close window" className="h-6 w-6 rounded-full border border-[#d35549] bg-[#ed6a5f]" />
            <button type="button" aria-label="Minimize window" className="h-6 w-6 rounded-full border border-[#d8a23f] bg-[#f5bf4f]" />
            <button type="button" aria-label="Zoom window" className="h-6 w-6 rounded-full border border-[#4fa73e] bg-[#61c554]" />
          </div>
          <h1 className="pb-1.5 text-[26px] leading-8 font-bold text-[#404040]">Box Side q - Autodesk Fusion (Education License)</h1>
        </header>
        <TabBar />
        <Ribbon />
        <Canvas />
        <Timeline />
      </main>
    </div>
  );
}
